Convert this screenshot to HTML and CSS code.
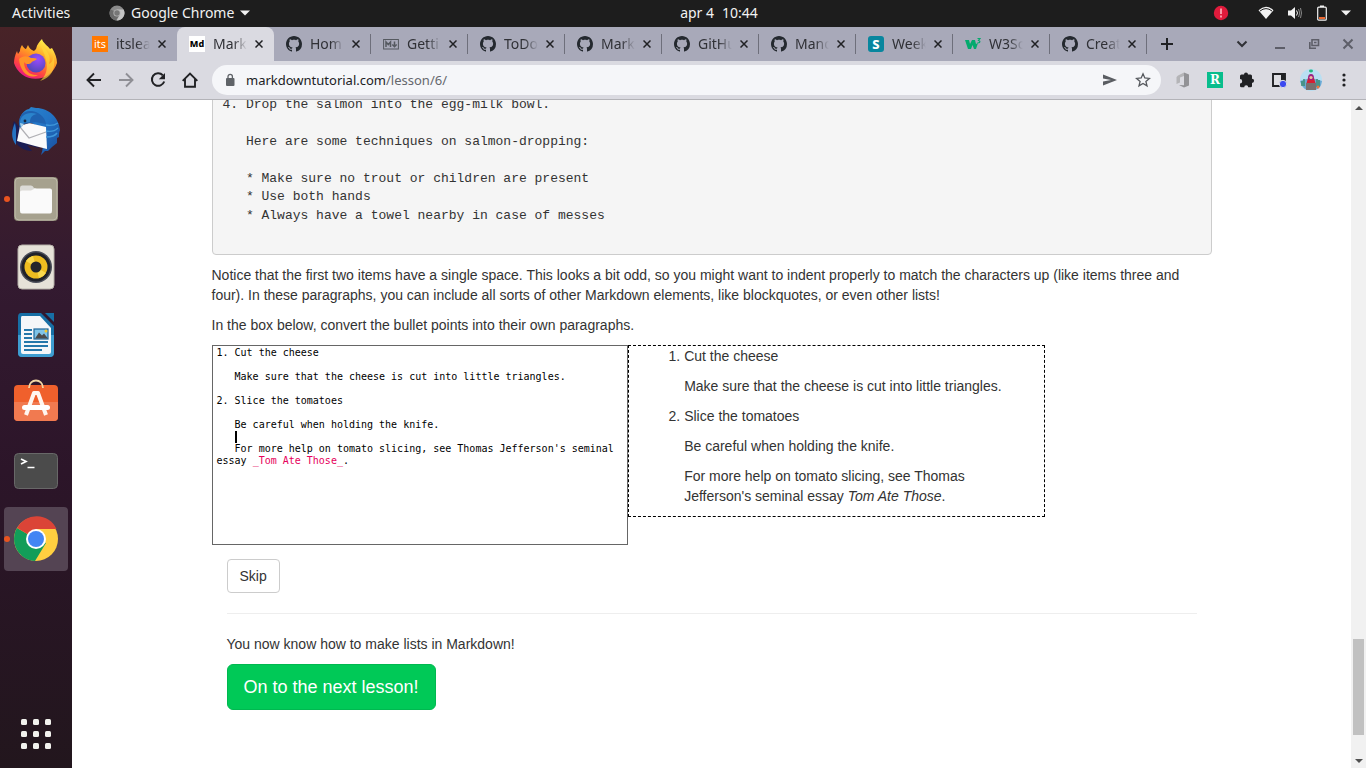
FILE: index.html
```html
<!DOCTYPE html>
<html lang="en">
<head>
<meta charset="utf-8">
<title>Markdown Tutorial</title>
<link rel="stylesheet" href="styles.css">
</head>
<body>
<svg class="defs" aria-hidden="true">
  <symbol id="octocat" viewBox="0 0 16 16"><path d="M8 0C3.58 0 0 3.58 0 8c0 3.54 2.29 6.53 5.47 7.59.4.07.55-.17.55-.38 0-.19-.01-.82-.01-1.49-2.01.37-2.53-.49-2.69-.94-.09-.23-.48-.94-.82-1.13-.28-.15-.68-.52-.01-.53.63-.01 1.08.58 1.23.82.72 1.21 1.87.87 2.33.66.07-.52.28-.87.51-1.07-1.78-.2-3.64-.89-3.64-3.95 0-.87.31-1.59.82-2.15-.08-.2-.36-1.02.08-2.12 0 0 .67-.21 2.2.82.64-.18 1.32-.27 2-.27s1.36.09 2 .27c1.53-1.04 2.2-.82 2.2-.82.44 1.1.16 1.92.08 2.12.51.56.82 1.27.82 2.15 0 3.07-1.87 3.75-3.65 3.95.29.25.54.73.54 1.48 0 1.07-.01 1.93-.01 2.2 0 .21.15.46.55.38A8.01 8.01 0 0 0 16 8c0-4.42-3.58-8-8-8z" fill="#24292f"/></symbol>
  <symbol id="cross" viewBox="0 0 8 8"><path d="M.5.5l7 7M7.5.5l-7 7" stroke="currentColor" stroke-width="1.500" fill="none"/></symbol>
</svg>

<header class="topbar">
  <button class="topbar-item">Activities</button>
  <button class="topbar-item app-menu">
    <svg width="16" height="16" viewBox="0 0 16 16"><circle cx="8" cy="8" r="7.500" fill="#8b8b8b"/><path d="M8 8L1.500 4.200A7.500 7.500 0 0 0 7 15.400L11 9z" fill="#6b6b6b"/><path d="M8 4.500h6.600A7.500 7.500 0 0 1 7.500 15.500L11 9.500z" fill="#c4c4c4"/><circle cx="8" cy="8" r="3.600" fill="#b5b5b5"/><circle cx="8" cy="8" r="2.700" fill="#777"/></svg>
    <span>Google Chrome</span>
    <svg width="10" height="6" viewBox="0 0 10 6"><path d="M0 .5h10L5 5.500z" fill="#f2f2f2"/></svg>
  </button>
  <time class="clock"><span>apr 4</span><span>10:44</span></time>
  <div class="tray">
    <svg class="tray-alert" width="16" height="16" viewBox="0 0 16 16"><circle cx="8" cy="8" r="7.200" fill="#e01b3c"/><path d="M8 3.600v5.400M8 10.600v1.800" stroke="#ffc4cc" stroke-width="1.500"/></svg>
    <svg width="16" height="14" viewBox="0 0 16 14"><path d="M.5 4.200Q8-2.800 15.500 4.200L8 13z" fill="#f2f2f2"/><path d="M2 5Q8 .2 14 5" stroke="#1d1d1d" stroke-width="1" fill="none"/></svg>
    <svg width="16" height="14" viewBox="0 0 16 14"><path d="M1 4.500h3L8 1v12L4 9.500H1z" fill="#f2f2f2"/><path d="M9.500 4.500q2 2.500 0 5" stroke="#f2f2f2" fill="none"/><path d="M11.500 3q2.500 4 0 8M13.500 2q2 5 0 10" stroke="#8a8a8a" fill="none"/></svg>
    <svg width="12" height="16" viewBox="0 0 12 16"><rect x="1.700" y="2.200" width="8.600" height="13" rx="1" stroke="#f2f2f2" stroke-width="1.200" fill="none"/><path d="M4 .5h4v1.500H4z" fill="#f2f2f2"/><path d="M3 12h6v2H3z" fill="#e9662f"/></svg>
    <svg width="10" height="6" viewBox="0 0 10 6"><path d="M0 .5h10L5 5.500z" fill="#f2f2f2"/></svg>
  </div>
</header>

<div class="desktop">
  <nav class="dock" aria-label="Dock">
    <button class="dock-item" aria-label="Firefox">
      <svg width="48" height="48" viewBox="0 0 48 48">
        <defs><linearGradient id="ff" x1=".8" y1=".1" x2=".3" y2="1"><stop offset="0" stop-color="#fff14a"/><stop offset=".4" stop-color="#ff9a24"/><stop offset=".75" stop-color="#ff4343"/><stop offset="1" stop-color="#e3148c"/></linearGradient><radialGradient id="fg" cx=".6" cy=".3" r=".7"><stop offset="0" stop-color="#9a4bff"/><stop offset="1" stop-color="#5248b8"/></radialGradient></defs>
        <path d="M8 12c0-3 1-4 2-6 1 2 3 4 4 4l2-4c1 3 3 5 6 6l2-2C25 5 28 2 30 0c1 4 5 6 8 10l2-1c3 5 5 10 5 15a22.500 22.500 0 0 1-43 0c0-4 1-8 3-12l1 3z" fill="url(#ff)"/>
        <path d="M28 5c6 5 12 12 9 20 4-2 4-5 4-8 4 12-2 22-13 25C39 33 35 20 28 5z" fill="#ffd93b" opacity=".65"/>
        <circle cx="24" cy="24" r="9.500" fill="url(#fg)"/>
        <path d="M7 20c4-4 9-3 12-1 3 0 5 0 6 1-2 2-5 2-6 4-2 2-6 1-7-1 0 8 6 14 14 13-9 5-18-3-19-16z" fill="#ff9328"/>
      </svg>
    </button>
    <button class="dock-item" aria-label="Thunderbird">
      <svg width="48" height="48" viewBox="0 0 48 48">
        <defs><linearGradient id="tb" x1="0" y1="0" x2="1" y2="1"><stop offset="0" stop-color="#2a86cf"/><stop offset=".5" stop-color="#2272c4"/><stop offset="1" stop-color="#194b9a"/></linearGradient></defs>
        <path d="M2 14C-1 22 0 34 8 40c4 3 9 4 12 4l-5-6 12 3z" fill="#1a1d55"/>
        <path d="M8 11C10 5 15 2 17 2l2-2 5 1c13 0 23 10 24 22-1 3-1 4-1 7l-2 1v5l-5 4-4 4-3 0-4 4c2-5 2-10 2-14 1-8 0-12-5-15z" fill="url(#tb)"/>
        <path d="M3 16c-4 8-4 16 1 22V22z" fill="#2573c2"/>
        <path d="M8 19l9-3 17 4 1 22-12-3-18-5z" fill="#fafafa"/>
        <path d="M8 20l9 11 17-6" fill="none" stroke="#b0b0b4" stroke-width="1.200"/>
        <path d="M7 18C6 9 11 3 20 4c6 1 13 5 14 13-6-1-10-3-15-1l-7 1-4 4z" fill="#1f62b0"/>
        <path d="M8 16c0-8 8-12 17-9-6 1-7 5-7 8l-6 1-3 4z" fill="#2b84cc"/>
        <path d="M8 16l4 1-3 4z" fill="#a6d0e8"/><circle cx="13" cy="14" r="1.400" fill="#16263f"/>
        <path d="M34 18c5 1 9 0 12-2M34 24c5 1 9 0 12-3M34 30c5 0 9-1 11-4" stroke="#3f97da" stroke-width="1.400" fill="none"/>
      </svg>
    </button>
    <button class="dock-item running" aria-label="Files">
      <svg width="48" height="48" viewBox="0 0 48 48"><rect x="2" y="2" width="44" height="44" rx="4" fill="#8c8774"/><rect x="3" y="3" width="42" height="42" rx="4" fill="#a6a18e" stroke="#c0bbab"/><path d="M8 13q0-2.500 2-2.500h9q2 0 3 2.500h1q1 1 2 1h13v8H8z" fill="#dcdbd7"/><path d="M8 17q0-1.500 2-1.500h9l4-2h15q2 0 2 2V36q0 2.500-2 2.500H10q-2 0-2-2.500z" fill="#fafafa"/></svg>
    </button>
    <button class="dock-item" aria-label="Rhythmbox">
      <svg width="48" height="48" viewBox="0 0 48 48"><rect x="6" y="2" width="36" height="44" rx="4" fill="#e6e2d8" stroke="#b5b0a8"/><circle cx="24" cy="24" r="16" fill="#4a4d58"/><circle cx="24" cy="24" r="14.500" fill="#202229"/><circle cx="24" cy="24" r="11.500" fill="#eebd20"/><path d="M24 24L14 18a12 12 0 0 1 7-5zM24 24l10 6a12 12 0 0 1-7 5z" fill="#f9d94d"/><circle cx="24" cy="24" r="5.500" fill="#24262b"/></svg>
    </button>
    <button class="dock-item" aria-label="LibreOffice Writer">
      <svg width="48" height="48" viewBox="0 0 48 48"><path d="M9 2h20l13 13v26q0 5-4 5H10q-4 0-4-4V6q0-4 3-4z" fill="#176fa5"/><path d="M6 24h36v18q0 4-4 4H10q-4 0-4-4z" fill="#3e9dd0"/><path d="M10 5h18l11 12v24q0 2-2 2H11q-2 0-2-2V7q0-2 1-2z" fill="#f5f7f9"/><path d="M33 2h9v9z" fill="#176fa5"/><path d="M12 19h8M12 23h8M12 27h8M12 31h24M12 35h24M12 39h18" stroke="#2477aa" stroke-width="1.800"/><rect x="22" y="18" width="14" height="10" fill="#7fc4e8" stroke="#1d6699" stroke-width="1.200"/><path d="M23 27.500l4-6 3 3 2-2 4 5z" fill="#4b4b4b"/><circle cx="34" cy="20" r="1.500" fill="#f6c82c"/></svg>
    </button>
    <button class="dock-item" aria-label="Ubuntu Software">
      <svg width="48" height="48" viewBox="0 2 48 48"><rect x="2" y="8" width="44" height="36" rx="4" fill="#f0602c"/><path d="M2 25h44v15q0 4-4 4H6q-4 0-4-4z" fill="#f17a50"/><path d="M17 11c0-10 14-10 14 0" stroke="#f2d6a4" stroke-width="1.800" fill="none"/><path d="M14 38l8-22h4l8 22" stroke="#fff6ef" stroke-width="4" fill="none" stroke-linejoin="round"/><rect x="10" y="28" width="28" height="5" rx="2.500" fill="#fff"/></svg>
    </button>
    <button class="dock-item" aria-label="Terminal">
      <svg width="48" height="48" viewBox="0 0 48 48"><rect x="2.500" y="6.500" width="43" height="35" rx="4" fill="#4b4b4b" stroke="#686868"/><path d="M9 12l5 2.500L9 17" stroke="#fff" stroke-width="1.700" fill="none"/><path d="M15.500 20.500h7" stroke="#fff" stroke-width="1.500"/></svg>
    </button>
    <button class="dock-item running current" aria-label="Google Chrome">
      <svg width="48" height="48" viewBox="0 0 48 48"><circle cx="24" cy="24" r="22" fill="#ffcf40"/><path d="M24 24L5 13a22 22 0 0 0 18 33L34 28z" fill="#129d59"/><path d="M24 24L5 13A22 22 0 0 1 44.500 14H24z" fill="#db4437"/><circle cx="24" cy="24" r="10" fill="#fff"/><circle cx="24" cy="24" r="8" fill="#4285f4"/></svg>
    </button>
    <button class="dock-item show-apps" aria-label="Show applications">
      <svg width="32" height="32" viewBox="0 0 32 32" fill="#f2f2ee"><rect x="1" y="1" width="6" height="6" rx="1.500"/><rect x="13" y="1" width="6" height="6" rx="1.500"/><rect x="25" y="1" width="6" height="6" rx="1.500"/><rect x="1" y="13" width="6" height="6" rx="1.500"/><rect x="13" y="13" width="6" height="6" rx="1.500"/><rect x="25" y="13" width="6" height="6" rx="1.500"/><rect x="1" y="25" width="6" height="6" rx="1.500"/><rect x="13" y="25" width="6" height="6" rx="1.500"/><rect x="25" y="25" width="6" height="6" rx="1.500"/></svg>
    </button>
  </nav>

  <div class="browser">
    <div class="tabstrip">
      <div class="tab"><span class="fav fav-its">its</span><span class="tab-title">itslea</span><button class="tab-close" aria-label="Close tab"><svg width="8" height="8"><use href="#cross"/></svg></button></div>
      <div class="tab active"><span class="fav fav-md">Md</span><span class="tab-title">Mark</span><button class="tab-close" aria-label="Close tab"><svg width="8" height="8"><use href="#cross"/></svg></button></div>
      <div class="tab"><svg class="fav"><use href="#octocat"/></svg><span class="tab-title">Hom</span><button class="tab-close" aria-label="Close tab"><svg width="8" height="8"><use href="#cross"/></svg></button></div>
      <div class="tab"><svg class="fav" viewBox="0 0 16 16"><rect x=".6" y="3.500" width="14.800" height="9.500" stroke="#555960" fill="none"/><path d="M3 11V6l2.300 2.600L7.500 6v5M11.500 5.500v4M9.300 8.500l2.200 2.200 2.200-2.200" stroke="#555960" stroke-width="1.500" fill="none"/></svg><span class="tab-title">Getti</span><button class="tab-close" aria-label="Close tab"><svg width="8" height="8"><use href="#cross"/></svg></button></div>
      <div class="tab"><svg class="fav"><use href="#octocat"/></svg><span class="tab-title">ToDo</span><button class="tab-close" aria-label="Close tab"><svg width="8" height="8"><use href="#cross"/></svg></button></div>
      <div class="tab"><svg class="fav"><use href="#octocat"/></svg><span class="tab-title">Mark</span><button class="tab-close" aria-label="Close tab"><svg width="8" height="8"><use href="#cross"/></svg></button></div>
      <div class="tab"><svg class="fav"><use href="#octocat"/></svg><span class="tab-title">GitHu</span><button class="tab-close" aria-label="Close tab"><svg width="8" height="8"><use href="#cross"/></svg></button></div>
      <div class="tab"><svg class="fav"><use href="#octocat"/></svg><span class="tab-title">Mano</span><button class="tab-close" aria-label="Close tab"><svg width="8" height="8"><use href="#cross"/></svg></button></div>
      <div class="tab"><span class="fav fav-s">S</span><span class="tab-title">Week</span><button class="tab-close" aria-label="Close tab"><svg width="8" height="8"><use href="#cross"/></svg></button></div>
      <div class="tab"><svg class="fav" viewBox="0 0 16 16"><path d="M0 4h4l1 4 2-4h3l1 4 2-1-2 6H9L7.500 9 6 13H3z" fill="#04aa6d"/><path d="M12.500 2.500H15L13.500 4.500Q15.500 5 14.500 6.500L12.500 6.800" stroke="#04aa6d" stroke-width="1.200" fill="none"/></svg><span class="tab-title">W3Sc</span><button class="tab-close" aria-label="Close tab"><svg width="8" height="8"><use href="#cross"/></svg></button></div>
      <div class="tab"><svg class="fav"><use href="#octocat"/></svg><span class="tab-title">Creat</span><button class="tab-close" aria-label="Close tab"><svg width="8" height="8"><use href="#cross"/></svg></button></div>
      <button class="new-tab" aria-label="New tab"><svg width="12" height="12" viewBox="0 0 12 12"><path d="M6 0v12M0 6h12" stroke="#202124" stroke-width="2"/></svg></button>
      <div class="window-controls">
        <button aria-label="Search tabs"><svg width="12" height="12" viewBox="0 0 12 12"><path d="M1.500 3.500L6 8l4.500-4.500" stroke="#303136" stroke-width="2" fill="none"/></svg></button>
        <button aria-label="Minimize"><svg width="12" height="12" viewBox="0 0 12 12"><path d="M1 10h10" stroke="#5d5e68" stroke-width="2"/></svg></button>
        <button aria-label="Restore"><svg width="12" height="12" viewBox="0 0 12 12"><path d="M4 1.800h6.500v5.700H4zM6 4.500h2.500" stroke="#5d5e68" stroke-width="1.600" fill="none"/><path d="M1.800 4v6.300H8" stroke="#5d5e68" stroke-width="1.600" fill="none"/></svg></button>
        <button aria-label="Close"><svg width="12" height="12" viewBox="0 0 12 12"><path d="M1.500 1.500l9 9M10.500 1.500l-9 9" stroke="#5d5e68" stroke-width="2"/></svg></button>
      </div>
    </div>

    <div class="toolbar">
      <div class="nav-buttons">
        <button aria-label="Back"><svg width="16" height="16" viewBox="0 0 16 16"><path d="M15 8H2M8 1.500L1.500 8 8 14.500" stroke="#202124" stroke-width="1.900" fill="none"/></svg></button>
        <button aria-label="Forward"><svg width="16" height="16" viewBox="0 0 16 16"><path d="M1 8h13M8 1.500L14.500 8 8 14.500" stroke="#8f8f95" stroke-width="1.900" fill="none"/></svg></button>
        <button aria-label="Reload"><svg width="16" height="16" viewBox="0 0 16 16"><path d="M12.800 3.200A6.300 6.300 0 1 0 14.200 9.500" stroke="#202124" stroke-width="2" fill="none"/><path d="M15 1v6.200H8.800z" fill="#202124"/></svg></button>
        <button aria-label="Home"><svg width="16" height="16" viewBox="0 0 16 16"><path d="M.7 8.800L8 1.500l7.300 7.300M3 7v7.800h10V7" stroke="#202124" stroke-width="1.900" fill="none"/></svg></button>
      </div>
      <div class="omnibox">
        <svg width="10" height="14" viewBox="0 0 10 14"><rect x="1" y="5" width="8.500" height="8" rx="1" fill="#5f6368"/><path d="M3 5.500V3.500a2.200 2.200 0 0 1 4.400 0v2" stroke="#5f6368" stroke-width="1.300" fill="none"/></svg>
        <a class="url" href="#">markdowntutorial.com<span class="url-path">/lesson/6/</span></a>
        <button aria-label="Share"><svg width="14" height="14" viewBox="0 0 14 14"><path d="M0 1.500L14 7 0 12.500V8.500L8 7 0 5.500z" fill="#5a5d62"/></svg></button>
        <button aria-label="Bookmark"><svg width="16" height="16" viewBox="0 0 16 16"><path d="M8 1.800l1.800 4.200 4.600.4-3.500 3 1.100 4.500L8 11.500l-4 2.400 1.100-4.500L1.600 6.400 6.200 6z" stroke="#55585d" stroke-width="1.300" fill="none"/></svg></button>
      </div>
      <div class="extensions">
        <button aria-label="Office"><svg width="16" height="16" viewBox="0 0 16 16"><path d="M9 .5L3 3.500 1.500 5v7L5 10.500V5.500L9 4z" fill="#b4b4b7"/><path d="M9 .5l5 2v11L9 15.500 4 13l5 .3z" fill="#929296"/></svg></button>
        <button aria-label="Reader"><span class="ext-r">R</span></button>
        <button aria-label="Extensions"><svg width="16" height="16" viewBox="0 0 16 16"><path d="M1 4q0-1.500 1.500-1.500H5a2 2 0 0 1 4 0h2.500Q13 2.500 13 4v2.700a2 2 0 0 1 0 4.200V14q0 1.300-1.500 1.300H9.200a2 2 0 0 0-4 0H2.500Q1 15.300 1 14v-2.500a2.200 2.200 0 0 0 0-4.400z" fill="#202124"/></svg></button>
        <button aria-label="Side panel"><svg width="16" height="16" viewBox="0 0 16 16"><path d="M2 2h12v12H2z" stroke="#202124" stroke-width="1.900" fill="#dddde2"/><path d="M10 1.500h4V8h-4z" fill="#202124"/><circle cx="12" cy="12" r="3.700" fill="#3c49f0" stroke="#dddde2"/></svg></button>
        <button aria-label="Profile"><svg width="22" height="22" viewBox="0 0 22 22"><circle cx="11" cy="11" r="11" fill="#b9dff2"/><path d="M0 12q11-5 22 0-1 8-7 9H7q-5-2-7-9z" fill="#6ba9d4"/><path d="M2 12v5M4 10v7M17 10v8M19 11v7" stroke="#3d8c73" stroke-width="1.500"/><path d="M8 9q3-3 6 0l2 7H6z" fill="#d61f32"/><path d="M8 9q0-4 3-4t3 4l-1 2H9z" fill="#9b2185"/><circle cx="11" cy="8.500" r="1.600" fill="#f0bd9d"/><rect x="6" y="14" width="10" height="7" fill="#78706f"/><ellipse cx="11" cy="2" rx="2" ry="1.400" fill="#22b77d"/><circle cx="18" cy="18" r="1.500" fill="#ef743b"/></svg></button>
        <button aria-label="Menu"><svg width="4" height="14" viewBox="0 0 4 14" fill="#202124"><circle cx="2" cy="2" r="1.600"/><circle cx="2" cy="7" r="1.600"/><circle cx="2" cy="12" r="1.600"/></svg></button>
      </div>
    </div>

    <div class="viewport">
      <main class="page">
        <div class="container">
<pre class="sample">4. Drop the salmon into the egg-milk bowl.

   Here are some techniques on salmon-dropping:

   * Make sure no trout or children are present
   * Use both hands
   * Always have a towel nearby in case of messes

</pre>
          <p>Notice that the first two items have a single space. This looks a bit odd, so you might want to indent properly to match the characters up (like items three and four). In these paragraphs, you can include all sorts of other Markdown elements, like blockquotes, or even other lists!</p>
          <p>In the box below, convert the bullet points into their own paragraphs.</p>
          <div class="exercise">
            <div class="editor">
<pre class="code">1. Cut the cheese

   Make sure that the cheese is cut into little triangles.

2. Slice the tomatoes

   Be careful when holding the knife.
   <span class="caret"></span>
   For more help on tomato slicing, see Thomas Jefferson's seminal essay <span class="em">_Tom Ate Those_</span>.</pre>
              <textarea class="editor-input" aria-label="Markdown" spellcheck="false"></textarea>
            </div>
            <div class="preview">
              <ol>
                <li><p>Cut the cheese</p><p>Make sure that the cheese is cut into little triangles.</p></li>
                <li><p>Slice the tomatoes</p><p>Be careful when holding the knife.</p><p>For more help on tomato slicing, see Thomas Jefferson's seminal essay <em>Tom Ate Those</em>.</p></li>
              </ol>
            </div>
          </div>
          <div class="actions">
            <button class="btn">Skip</button>
            <hr>
            <p>You now know how to make lists in Markdown!</p>
            <a class="btn btn-next" href="#">On to the next lesson!</a>
          </div>
        </div>
      </main>
      <div class="scrollbar" aria-hidden="true">
        <svg width="8" height="4" viewBox="0 0 8 4"><path d="M0 4h8L4 0z" fill="#505050"/></svg>
        <div class="track"><div class="thumb"></div></div>
        <svg width="8" height="4" viewBox="0 0 8 4"><path d="M0 0h8L4 4z" fill="#505050"/></svg>
      </div>
    </div>
  </div>
</div>
</body>
</html>
```
FILE: styles.css
```css
* { box-sizing: border-box; }

body {
  margin: 0;
  height: 100vh;
  display: flex;
  flex-direction: column;
  overflow: hidden;
  font-family: "Liberation Sans", Arial, sans-serif;
  font-size: 14px;
  line-height: 20px;
  color: #333;
  background: #fff;
}

button {
  font: inherit;
  color: inherit;
  border: 0;
  padding: 0;
  background: none;
}

svg { display: block; flex: none; }
.defs { position: absolute; width: 0; height: 0; }

/* Top bar */
.topbar {
  flex: none;
  height: 27px;
  display: grid;
  grid-template-columns: 72px 1fr auto 1fr;
  align-items: center;
  padding-bottom: 1px;
  background: #1d1d1d;
  color: #f2f2f2;
  font-family: "Noto Sans", sans-serif;
}
.topbar-item { padding-left: 12px; white-space: nowrap; justify-self: start; }
.app-menu { display: flex; align-items: center; gap: 6px; padding-left: 37px; }
.clock { display: flex; gap: 8px; }
.tray {
  display: flex;
  align-items: center;
  justify-content: flex-end;
  gap: 13px;
  padding-right: 15px;
}
.tray-alert { margin-right: 16px; }

/* Dock */
.desktop { flex: 1; min-height: 0; display: flex; }
.dock {
  flex: none;
  width: 72px;
  padding: 4px 4px 2px;
  display: flex;
  flex-direction: column;
  gap: 4px;
  background: linear-gradient(#482327, #331a30 34%, #2c1529 60%, #22161d);
}
.dock-item {
  position: relative;
  height: 64px;
  display: grid;
  place-items: center;
  border-radius: 4px;
}
.current { background: #544453; }
.running::before {
  content: "";
  position: absolute;
  left: 0;
  top: 29px;
  width: 6px;
  height: 6px;
  border-radius: 50%;
  background: #e95420;
}
.show-apps { margin-top: auto; }

/* Browser */
.browser { flex: 1; min-width: 0; display: flex; flex-direction: column; }
.tabstrip {
  flex: none;
  height: 34px;
  display: flex;
  padding-left: 8px;
  background: #a8a9b9;
  font-family: "Noto Sans", sans-serif;
  color: #303136;
}
.tab {
  position: relative;
  flex: 0 1 97px;
  min-width: 0;
  display: flex;
  align-items: center;
  padding: 0 11px 0 12px;
}
.tab:nth-child(n+3)::after {
  content: "";
  position: absolute;
  right: 0;
  top: 7px;
  width: 1px;
  height: 20px;
  background: #6e6f7b;
}
.active { background: #dadae1; border-radius: 8px 8px 0 0; }
.fav {
  flex: none;
  width: 16px;
  height: 16px;
  line-height: 16px;
  text-align: center;
  overflow: hidden;
}
.fav-its { background: #ff7800; color: #fff; font-size: 11px; }
.fav-md { background: #fff; color: #000; font-size: 9px; font-weight: 800; }
.fav-s { background: #08869e; color: #fff; font-size: 13px; font-weight: 800; border-radius: 3px; }
.tab-title {
  flex: 1;
  margin: 0 8px;
  overflow: hidden;
  white-space: nowrap;
  -webkit-mask-image: linear-gradient(90deg, #000 60%, transparent);
  mask-image: linear-gradient(90deg, #000 60%, transparent);
}
.tab-close { color: #202124; }
.new-tab { margin-left: 14px; }
.window-controls {
  margin-left: auto;
  display: flex;
  align-items: center;
  gap: 22px;
  padding-right: 12px;
}
.window-controls button:first-child { margin-right: 4px; }

.toolbar {
  flex: none;
  height: 39px;
  display: flex;
  align-items: center;
  gap: 14px;
  padding: 0 20px 0 14px;
  background: #dadae1;
  border-bottom: 1px solid #b3b3b8;
}
.nav-buttons { display: flex; gap: 16px; }
.omnibox {
  flex: 1;
  height: 30px;
  display: flex;
  align-items: center;
  padding: 0 10px 0 13px;
  border-radius: 15px;
  background: #f5f6f9;
}
.omnibox button { margin-left: 18px; }
.url {
  flex: 1;
  margin-left: 11px;
  font-family: "Noto Sans", sans-serif;
  font-size: 13px;
  color: #202124;
  text-decoration: none;
}
.url-path { color: #65686d; }
.extensions { display: flex; align-items: center; gap: 16px; }
.extensions button:nth-child(5) { margin: 0 4px 0 -3px; }
.ext-r {
  display: block;
  width: 16px;
  height: 16px;
  line-height: 16px;
  background: #08bd8c;
  color: #fff;
  font-family: "DejaVu Serif", serif;
  font-size: 12px;
  font-weight: 700;
}

/* Lesson page */
.viewport { flex: 1; min-height: 0; display: flex; overflow: hidden; }
.page { flex: 1; min-width: 0; overflow: hidden; }
.container { max-width: 1000px; margin: 0 auto; }
p { margin: 0 0 10px; }
pre { margin: 0; }
.sample {
  margin: -15px 0 10px;
  padding: 10px;
  border: 1px solid #ccc;
  border-radius: 4px;
  background: #f5f5f5;
  font-family: "Liberation Mono", monospace;
  font-size: 13px;
  line-height: 1.42;
}
.exercise { display: grid; grid-template-columns: 5fr 5fr 2fr; align-items: start; }
.editor { position: relative; height: 200px; border: 1px solid #666; }
.code {
  padding: 1px 4px;
  font-family: "DejaVu Sans Mono", monospace;
  font-size: 10px;
  line-height: 12px;
  color: #000;
  white-space: pre-wrap;
}
.em { color: #e6005c; }
.caret {
  display: inline-block;
  width: 2px;
  height: 12px;
  vertical-align: top;
  background: #000;
}
.editor-input {
  position: absolute;
  inset: 0;
  width: 100%;
  height: 100%;
  padding: 1px 4px;
  border: 0;
  resize: none;
  background: transparent;
}
.preview { border: 1px dashed #000; padding: 0 15px; }
ol { margin: 0; padding-left: 40px; }
.actions { padding: 14px 15px 0; }
.btn {
  display: inline-block;
  padding: 6px 12px;
  border: 1px solid #ccc;
  border-radius: 4px;
  background: #fff;
  color: #333;
  text-decoration: none;
}
hr { margin: 20px 0; border: 0; border-top: 1px solid #eee; }
.btn-next {
  padding: 10px 16px;
  border-color: #00b850;
  border-radius: 6px;
  background: #00c957;
  color: #fff;
  font-size: 18px;
  line-height: 24px;
}

.scrollbar {
  flex: none;
  width: 15px;
  padding: 6px 2px 5px;
  display: flex;
  flex-direction: column;
  align-items: center;
  gap: 6px;
  background: #f1f1f1;
}
.track {
  flex: 1;
  width: 100%;
  display: flex;
  flex-direction: column;
  justify-content: flex-end;
  padding-bottom: 18px;
}
.thumb { height: 96px; background: #c1c1c1; }
```
